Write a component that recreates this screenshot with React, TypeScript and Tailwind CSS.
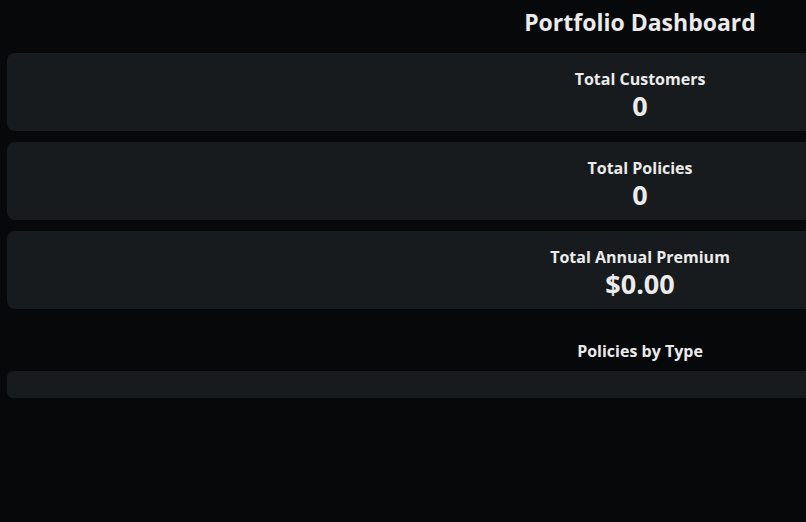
const STATS = [
  { label: "Total Customers", value: "0" },
  { label: "Total Policies", value: "0" },
  { label: "Total Annual Premium", value: "$0.00" },
];

export default function App() {
  return (
    <div
      className="min-h-screen w-[1280px] bg-[#07080a] px-[7px] pt-[7px] text-[#ebebeb]"
      style={{ fontFamily: '"Open Sans", "Noto Sans", sans-serif' }}
    >
      <h1 className="text-center text-[23px] font-bold leading-[30px]">Portfolio Dashboard</h1>

      <div className="mt-[16px] flex flex-col gap-[11px]">
        {STATS.map((s) => (
          <section
            key={s.label}
            className="flex h-[78px] flex-col items-center justify-center rounded-lg bg-[#181b1e] pt-[6px]"
          >
            <p className="text-[16px] font-bold leading-[22px]">{s.label}</p>
            <p className="text-[27px] font-bold leading-[32px]">{s.value}</p>
          </section>
        ))}
      </div>

      <h2 className="mt-[31px] text-center text-[16px] font-bold leading-[22px]">Policies by Type</h2>
      <div className="mt-[9px] h-[27px] rounded-md bg-[#181b1e]" />
    </div>
  );
}
